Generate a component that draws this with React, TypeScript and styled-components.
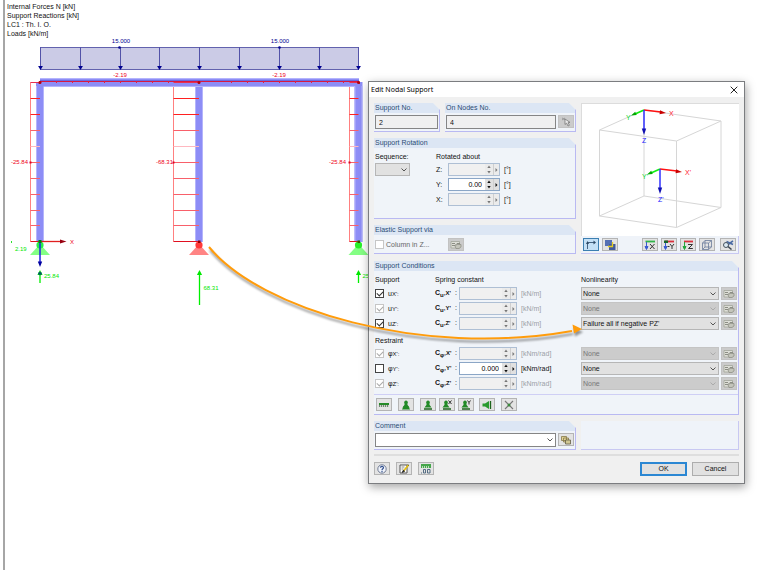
import React, { ReactNode, useId } from "react";
import styled, { createGlobalStyle, css } from "styled-components";

const GlobalStyle = createGlobalStyle`
  * { box-sizing: border-box; }
  body { margin: 0; background: #fff; }
  body, button, input, select {
    font-family: "Liberation Sans", Arial, sans-serif;
    font-size: 7px;
    line-height: 10px;
    color: #111;
  }
  svg { display: block; }
`;

const Page = styled.main`
  position: relative;
  min-height: 100vh;
  padding-left: 3px;
  display: flex;
`;

const Viewport = styled.section`
  flex: 1;
  border-left: 2px solid #a6a6a6;
`;

const Legend = styled.div`
  padding: 2px 0 0 2px;
  line-height: 9px;
`;

/* ---------- structural model ---------- */

const ModelDrawing = styled.svg`
  font-size: 6px;
  font-family: "Liberation Sans", Arial, sans-serif;
`;

const loadX = [40, 80, 120, 159, 199, 239, 279, 319, 358];
const stationY = [98, 114, 130, 146, 162, 178, 194, 210, 225];

function Column({ x, from }: { x: number; from: number }) {
  return (
    <g>
      <rect x={x - 4} y={82} width={8} height={160} fill="#8d8df6" />
      <path d={`M${x - 3.5} 86V242M${x + 3.5} 86V242`} stroke="#b4b4fb" />
      <path d={`M${x} 82.5H${from}V241.5`} fill="none" stroke="#ff8080" />
      {stationY.map((y, i) => (
        <path key={y} d={`M${from} ${y + 0.5}H${x}`} stroke={i < 2 ? "#ff2020" : i === 3 ? "#ffb8c0" : "#f8606a"} />
      ))}
      <path d={`M${from} 241.5H${x}`} stroke="#e01020" />
      <rect x={from - 1} y={161.5} width={2} height={2} fill="#e00020" />
      <circle cx={x} cy={82.5} r={1.5} fill="#a00000" />
    </g>
  );
}

function Support({ x, dot, fill }: { x: number; dot: string; fill: string }) {
  return (
    <g>
      <path d={`M${x} 244l10 11h-20z`} fill={fill} />
      <circle cx={x} cy={245} r={3.6} fill={dot} />
    </g>
  );
}

function Reaction({ x, length, children, labelY }: { x: number; length: number; children: string; labelY: number }) {
  return (
    <g fill="#00e800">
      <path d={`M${x} ${270 + length}V273`} stroke="#00f000" strokeWidth={1.3} />
      <path d={`M${x} 270l2.6 5h-5.2z`} />
      <text x={x + 4} y={labelY}>{children}</text>
    </g>
  );
}

function Model() {
  return (
    <ModelDrawing width="385" height="290" viewBox="5 38 385 290" role="img" aria-label="Frame with internal forces and reactions">
      <rect x={40.5} y={47.5} width={318} height={22} fill="#cbcbe6" stroke="#6262ae" />
      {loadX.map((x) => (
        <g key={x} fill="#000090">
          <path d={`M${x + 0.5} 47V67`} stroke="#5353a8" />
          <path d={`M${x + 0.5} 70l-2.4-4h4.8z`} />
        </g>
      ))}
      <g fill="#000090">
        <circle cx={119.5} cy={47.5} r={1.3} />
        <circle cx={279.5} cy={47.5} r={1.3} />
        <text x={121} y={43} textAnchor="middle">15.000</text>
        <text x={280} y={43} textAnchor="middle">15.000</text>
      </g>
      <g fill="#ee0020">
        <text x={120} y={77} textAnchor="middle">-2.19</text>
        <text x={279} y={77} textAnchor="middle">-2.19</text>
      </g>

      <Column x={40} from={30.5} />
      <Column x={199} from={173.5} />
      <Column x={358.5} from={349.5} />

      <rect x={40} y={78} width={319} height={8.5} fill="#8d8df6" />
      <path d="M40 78.5H359M44 86.5H355" stroke="#b4b4fb" />
      <path d="M40 80.5H359" stroke="#6c6ce0" />
      <path d="M40 81.5H359" stroke="#d81840" />
      <path d="M56.5 81v2M72.5 81v2M88.5 81v2M104.5 81v2M120.5 81v2M136.5 81v2M152.5 81v2M168.5 81v2M231.5 81v2M247.5 81v2M263.5 81v2M279.5 81v2M295.5 81v2M311.5 81v2M327.5 81v2M343.5 81v2" stroke="#e02040" />
      <path d="M173.5 82.5H199M349.5 82.5H359M30.5 82.5H40" stroke="#e83050" />
      <g fill="#b00010">
        <circle cx={40} cy={82.5} r={1.5} />
        <circle cx={199} cy={82.5} r={1.5} />
        <circle cx={358.5} cy={82.5} r={1.5} />
      </g>

      <g fill="#ee0020">
        <text x={11} y={164}>-25.84</text>
        <text x={156} y={164}>-68.31</text>
        <text x={329} y={164}>-25.84</text>
      </g>

      <Support x={40} dot="#28f048" fill="#84ff84" />
      <Support x={199} dot="#ff3838" fill="#ff8484" />
      <Support x={358.5} dot="#28f028" fill="#84ff84" />
      <rect x={198} y={240.5} width={2.5} height={2.5} fill="#900000" />
      <rect x={357.5} y={240.5} width={2.5} height={2.5} fill="#405000" />

      <path d="M40 241.5H60" stroke="#e02020" strokeWidth={1.3} />
      <path d="M66.5 241.5l-6.5-2v4z" fill="#980010" />
      <text x={70} y={244} fill="#ee0020">X</text>
      <path d="M40 243V262" stroke="#2020e0" strokeWidth={1.5} />
      <path d="M40 267l-2.2-5.5h4.4z" fill="#0000a0" />
      <rect x={38.5} y={240} width={3} height={3} fill="#008010" />

      <Reaction x={40} length={13} labelY={278}>25.84</Reaction>
      <Reaction x={199.5} length={35} labelY={290}>68.31</Reaction>
      <Reaction x={358.5} length={13} labelY={278}>25.84</Reaction>
      <circle cx={40} cy={273.5} r={1.8} fill="#006060" />
      <text x={15} y={251} fill="#00e800">2.19</text>
      <rect x={11} y={241} width={1} height={2} fill="#30e030" />
    </ModelDrawing>
  );
}

/* ---------- dialog shell ---------- */

const Dialog = styled.section`
  position: absolute;
  left: 368px;
  right: 15px;
  top: 81px;
  min-width: 377px;
  background: #f0f0f0;
  border: 1px solid #7b7d80;
  box-shadow: 1px 3px 9px rgba(0, 0, 0, 0.36);
`;

const TitleBar = styled.header`
  height: 15px;
  background: #fff;
  display: flex;
  align-items: center;
  justify-content: space-between;
  padding: 0 5px 0 2px;
`;

const Title = styled.h1`
  margin: 0;
  font: 400 7px/12px "Noto Sans", "Open Sans", sans-serif;
  color: #000;
`;

const CloseButton = styled.button`
  padding: 1px;
  border: 0;
  background: none;
`;

const DialogBody = styled.form`
  padding: 6px 5px 7px;
  display: flex;
  flex-direction: column;
`;

const Split = styled.div`
  display: grid;
  grid-template-columns: 202px minmax(0, 1fr);
  column-gap: 5px;
`;

const Stack = styled.div`
  display: flex;
  flex-direction: column;
  gap: 6px;
`;

const NumberGroups = styled.div`
  display: grid;
  grid-template-columns: 66px minmax(0, 1fr);
  gap: 5px;
`;

const Panel = styled.section<{ $grow?: boolean }>`
  background: #f0f4f9;
  border: solid #b9b9f2;
  border-width: 0 1px 1px 0;
  clip-path: polygon(0 0, calc(100% - 7px) 0, 100% 7px, 100% 100%, 0 100%);
  ${(p) => p.$grow && css`flex: 1;`}
`;

const PanelTitle = styled.h2`
  margin: 0;
  padding-left: 1px;
  height: 10px;
  background: #dce6f4;
  color: #2b4c74;
  font-size: 7px;
  font-weight: 400;
  line-height: 10px;
`;

const FieldLine = styled.div`
  display: flex;
  gap: 2px;
  padding: 2px 1px;
`;

const TextField = styled.input`
  flex: 1;
  min-width: 0;
  height: 14px;
  padding: 0 3px;
  border: 1px solid #858585;
  background: #f0f0f0;
`;

/* ---------- small controls ---------- */

const IconButton = styled.button<{ $active?: boolean }>`
  flex: none;
  width: 16px;
  height: 13px;
  padding: 0;
  display: grid;
  place-items: center;
  background: ${(p) => (p.$active ? "#c4e0f6" : "#e3e3e3")};
  border: 1px solid ${(p) => (p.$active ? "#3c7fb1" : "#b4b4b4")};
  &:disabled { background: #cbcbcb; border-color: #c2c2c2; }
`;

const Check = styled.input.attrs({ type: "checkbox" })`
  appearance: none;
  flex: none;
  width: 9px;
  height: 9px;
  margin: 0;
  border: 1px solid #444;
  background: #fff;
  display: grid;
  place-items: center;
  &:disabled { border-color: #c6c6c6; }
  &:checked::after {
    content: "";
    width: 5px;
    height: 3px;
    border: solid #333;
    border-width: 0 0 1px 1px;
    transform: rotate(-45deg);
    margin-bottom: 2px;
  }
  &:checked:disabled::after { border-color: #aaa; }
`;

const SelectFrame = styled.span`
  position: relative;
  display: block;
  flex: 1;
  min-width: 0;
  color: #555;
  & > svg {
    position: absolute;
    right: 3px;
    top: 50%;
    margin-top: -2px;
    pointer-events: none;
  }
  &:has(:disabled) { color: #aaa; }
`;

const SelectBox = styled.select<{ $white?: boolean }>`
  appearance: none;
  display: block;
  width: 100%;
  height: ${(p) => (p.$white ? 14 : 13)}px;
  padding: 0 12px 0 1px;
  border: 1px solid ${(p) => (p.$white ? "#858585" : "#b6b6b6")};
  border-radius: 0;
  background: ${(p) => (p.$white ? "#fff" : "#e1e1e1")};
  &:disabled { background: #cccccc; border-color: #c4c4c4; color: #777; opacity: 1; }
`;

function Select({ label, options, disabled, white }: { label: string; options: string[]; disabled?: boolean; white?: boolean }) {
  return (
    <SelectFrame>
      <SelectBox aria-label={label} disabled={disabled} $white={white}>
        {options.map((o) => <option key={o}>{o}</option>)}
      </SelectBox>
      <svg width="6" height="4" viewBox="0 0 6 4" fill="none" stroke="currentColor"><path d="M.5.5 3 3 5.5.5" /></svg>
    </SelectFrame>
  );
}

const NumberFrame = styled.div<{ $off?: boolean }>`
  display: flex;
  height: 13px;
  border: 1px solid ${(p) => (p.$off ? "#aebfd4" : "#8ba6c6")};
  background: ${(p) => (p.$off ? "#f0f0f0" : "#fff")};
`;

const NumberInput = styled.input`
  flex: 1;
  min-width: 0;
  padding: 0 3px 0 0;
  border: 0;
  background: none;
  text-align: right;
  color: #000;
`;

const Spinner = styled.div`
  display: flex;
  flex-direction: column;
  width: 8px;
`;

const SpinButton = styled.button<{ $side?: boolean }>`
  flex: 1;
  min-height: 0;
  padding: 0;
  border: 0;
  display: grid;
  place-items: center;
  background: #e0e0e0;
  color: #111;
  ${(p) => p.$side && css`flex: none; width: 6px; border-left: 1px solid #cfcfcf;`}
  &:disabled { color: #777; background: #ebebeb; }
`;

function NumberField({ label, value = "" }: { label: string; value?: string }) {
  const off = value === "";
  return (
    <NumberFrame $off={off}>
      <NumberInput aria-label={label} defaultValue={value} disabled={off} />
      <Spinner>
        <SpinButton type="button" aria-label="Increase" disabled={off}>
          <svg width="4" height="3" viewBox="0 0 4 3" fill="currentColor"><path d="M2 .5l1.7 2.5H.3z" /></svg>
        </SpinButton>
        <SpinButton type="button" aria-label="Decrease" disabled={off}>
          <svg width="4" height="3" viewBox="0 0 4 3" fill="currentColor"><path d="M2 2.5L.3 0h3.4z" /></svg>
        </SpinButton>
      </Spinner>
      <SpinButton $side type="button" aria-label="More" disabled={off}>
        <svg width="3" height="4" viewBox="0 0 3 4" fill="currentColor"><path d="M.5 0l2 2-2 2z" /></svg>
      </SpinButton>
    </NumberFrame>
  );
}

/* ---------- icons ---------- */

function Icon({ children }: { children: ReactNode }) {
  return <svg width="12" height="10" viewBox="0 0 12 10" fill="none" aria-hidden="true">{children}</svg>;
}

const DiagramIcon = () => (
  <Icon>
    <path d="M1 1.5h8.5v6.5H1z" fill="#dedfd8" stroke="#a2a49a" strokeWidth=".8" />
    <path d="M2 3.5h3M2 5.5h3l2-2h3" stroke="#8b8d83" />
    <path d="M5 6l2-1.5h4V7L9 8.5H6z" fill="#c4c5bb" stroke="#8b8d83" strokeWidth=".7" />
  </Icon>
);

const PickIcon = () => (
  <Icon>
    <path d="M2 1l3 1.5M2 3l3-2" stroke="#999" />
    <path d="M5 2v5.500l1.600-1.400L8 9l1.400-.7L8 5.700l2-.3z" fill="#eee" stroke="#777" strokeWidth=".8" />
  </Icon>
);

const Base = () => <path d="M2 9h8" stroke="#1c641c" strokeWidth="1.3" />;
const Cone = ({ x = 6 }: { x?: number }) => (
  <g fill="#228a26"><circle cx={x} cy="2.4" r="1.8" /><path d={`M${x - 1} 2h2l.6 3 2 2.5h-7.2L${x - 1.6} 5z`} /></g>
);

const supportIcons: { name: string; gap: number; art: ReactNode }[] = [
  { name: "Free", gap: 0, art: <><path d="M1 4h10" stroke="#258a28" strokeWidth="2" /><path d="M1 6h10" stroke="#4e6a4e" strokeWidth="1.6" strokeDasharray="1.2 .8" /></> },
  { name: "Fixed", gap: 6, art: <><Cone /><path d="M2 9.500l1.500-3h5L10 9.500z" fill="#228a26" /></> },
  { name: "Hinged", gap: 6, art: <><Cone /><Base /></> },
  { name: "Sliding in X", gap: 3, art: <><Cone x={5} /><Base /><path d="M7.500.5l3 3.500M10.500.5l-3 3.500" stroke="#333" /></> },
  { name: "Sliding in Y", gap: 3, art: <><Cone x={5} /><Base /><path d="M7.500.5l1.500 2 1.500-2M9 2.500V4.500" stroke="#333" /></> },
  { name: "Lateral", gap: 5, art: <><path d="M1.500 3.500H4L8 1v8L4 6.500H1.500z" fill="#2a9a2e" /><path d="M9.500 1v8" stroke="#1c641c" strokeWidth="1.3" /></> },
  { name: "Clear", gap: 6, art: <><path d="M2 1l8 8M10 1L2 9" stroke="#777" strokeWidth="1.2" /><circle cx="6" cy="5" r="1.5" fill="#3b8a3b" /></> },
];

const viewIcons: { name: string; active?: boolean; gap: number; art: ReactNode }[] = [
  { name: "Show axes", active: true, gap: 0, art: <><path d="M2.5 9V2.5H10" stroke="#456482" /><path d="M1 4L2.5 1 4 4zM8.500.5L11 2.500 8.500 4.500z" fill="#2c4966" /></> },
  { name: "Show solids", gap: 3, art: <><path d="M1 0h7v6H1z" fill="#5570b4" /><path d="M5 4h6.500v6H5z" fill="#425b9c" /><path d="M4 6.500h4.500V2" stroke="#e6ce26" strokeWidth="1.3" /></> },
  { name: "View in X", gap: 24, art: <><path d="M1.500 1.500h9.500" stroke="#32b44a" strokeWidth="1.800" /><path d="M2.500 2v6M1 6.500h3L2.500 9.500z" fill="#3a5bd2" stroke="#3a5bd2" /><path d="M6 4l4.500 5M10.500 4L6 9" stroke="#333" /></> },
  { name: "View against Y", gap: 3, art: <><path d="M2 1.500h9" stroke="#d8303e" strokeWidth="1.800" /><path d="M2.500 2v6M1 6.500h3L2.500 9.500z" fill="#3a5bd2" stroke="#3a5bd2" /><path d="M1 .5h4v2.500H1z" fill="#17652a" /><path d="M4.500 6.500h2M7 4l2 2.500L11 4M9 6.500V9" stroke="#333" /></> },
  { name: "View in Z", gap: 3, art: <><path d="M2 1.500h9" stroke="#d8303e" strokeWidth="1.800" /><path d="M2.500 2v6M1 6.500h3L2.500 9.500z" fill="#26a83e" stroke="#26a83e" /><path d="M6 4.500h4.500L6.500 8.500h4.300" stroke="#333" /></> },
  { name: "Isometric view", gap: 3, art: <><path d="M1.500 3h6v6.500h-6zM4 .5h6.500V7H4zM1.500 3L4 .5M7.500 3l3-2.500M7.500 9.500l3-2.500M1.500 9.500L4 7" stroke="#6b7c9c" strokeWidth=".8" /></> },
  { name: "Zoom all", gap: 5, art: <><path d="M4.500 1.500l6.500 3M11 .8L5.500 5" stroke="#4a6aa4" strokeWidth="1.600" /><circle cx="4" cy="5" r="2.500" fill="#dceaf4" stroke="#46525e" /><path d="M6 6.500L9.500 9.500" stroke="#3b4653" strokeWidth="1.500" /></> },
];

/* ---------- preview ---------- */

const PreviewColumn = styled.div`
  display: flex;
  flex-direction: column;
`;

const Preview = styled.div`
  height: 133px;
  background: #fff;
  border: solid #dcdcdc;
  border-width: 1px 0 0 1px;
  display: flex;
  justify-content: center;
`;

const CubeDrawing = styled.svg`
  font-size: 7px;
  flex: none;
`;

const ViewTools = styled.div`
  display: flex;
  align-items: center;
  height: 18px;
  padding-left: 2px;
  background: #eff3f9;
  border: solid #c8c8f2;
  border-width: 0 1px 1px 0;
`;

const ToolSlot = styled.span<{ $gap: number }>`
  flex: none;
  margin-left: ${(p) => p.$gap}px;
`;

function Axes({ x, y, mark }: { x: number; y: number; mark: string }) {
  return (
    <g transform={`translate(${x} ${y})`}>
      <path d="M0 0L17 2" stroke="#ff1010" strokeWidth="1.5" />
      <path d="M22 3l-6.500 1.200.5-4z" fill="#c80000" />
      <path d="M0 0L-9 4" stroke="#10f010" strokeWidth="1.5" />
      <path d="M-13 5.500l4.200-3.700 1.500 3.300z" fill="#00a800" />
      <path d="M0 0V19" stroke="#3030ff" strokeWidth="1.5" />
      <path d="M0 25l-2.200-6.500h4.400z" fill="#1010b0" />
      <text x="25" y="6" fill="#ff2030">X{mark}</text>
      <text x="-18" y="10" fill="#10d830">Y{mark}</text>
      <text x="-2" y="33" fill="#2020ff">Z{mark}</text>
    </g>
  );
}

function NodePreview() {
  return (
    <Preview>
      <CubeDrawing width="157" height="132" viewBox="1 1 157 132" role="img" aria-label="Support axes preview">
        <path d="M63 7L140 18 95.5 38 18.5 27zM18.5 27V113L95.5 124.5 140 104.5V18M95.5 38V124.5M63 7V93L140 104.5M63 93L18.5 113" fill="none" stroke="#d6d6d6" />
        <Axes x={63} y={7} mark="" />
        <Axes x={79} y={66} mark="'" />
      </CubeDrawing>
    </Preview>
  );
}

/* ---------- rotation and conditions ---------- */

const RotationGrid = styled.div`
  display: grid;
  grid-template-columns: 61px minmax(0, 1fr);
  padding: 4px 0 0 1px;
`;

const Caption = styled.div`
  height: 11px;
`;

const SequenceBox = styled.div`
  width: 35px;
`;

const AngleRows = styled.div`
  display: grid;
  row-gap: 2px;
`;

const AngleRow = styled.div`
  display: grid;
  grid-template-columns: 12px 52px auto;
  align-items: center;
`;

const Unit = styled.span<{ $off?: boolean }>`
  padding-left: 4px;
  white-space: nowrap;
  color: ${(p) => (p.$off ? "#9b9fa6" : "#111")};
`;

const ColumnLine = styled.div`
  display: flex;
  align-items: center;
  gap: 2px;
  padding: 3px 1px 2px;
  color: #666;
`;

const ColumnLabel = styled.label`
  width: 60px;
`;

const Conditions = styled(Panel)`
  margin-top: 7px;
`;

const conditionColumns = css`
  display: grid;
  grid-template-columns: 60px 24px 58px 64px minmax(0, 1fr) 18px;
  align-items: center;
`;

const HeadRow = styled.div<{ $second?: boolean }>`
  ${conditionColumns}
  margin: ${(p) => (p.$second ? "6px 0 1px" : "0 0 2px")};
  & > :nth-child(2) { grid-column: 2 / 5; }
  & > :nth-child(3) { grid-column: 5; }
`;

const ConditionBody = styled.div`
  padding: 4px 1px 4px;
`;

const Rows = styled.div`
  display: grid;
  row-gap: 2px;
`;

const ConditionRow = styled.div`
  ${conditionColumns}
  height: 13px;
  & > button { justify-self: end; }
`;

const DofLabel = styled.span`
  display: flex;
  align-items: center;
  gap: 4px;
`;

const Axis = styled.small`
  font-size: 6px;
`;

const Constant = styled.span`
  display: flex;
  justify-content: space-between;
  padding-right: 2px;
  white-space: nowrap;
`;

const ConstantName = styled.b`
  small { font-size: 6px; }
  sub { font-size: 6px; line-height: 6px; }
`;

interface Dof { kind: "u" | "φ"; axis: string; checked?: boolean; locked?: boolean; value?: string; nonlinearity: string }

const translations: Dof[] = [
  { kind: "u", axis: "X", checked: true, nonlinearity: "None" },
  { kind: "u", axis: "Y", checked: true, locked: true, nonlinearity: "None" },
  { kind: "u", axis: "Z", checked: true, nonlinearity: "Failure all if negative PZ'" },
];

const rotations: Dof[] = [
  { kind: "φ", axis: "X", checked: true, locked: true, nonlinearity: "None" },
  { kind: "φ", axis: "Y", value: "0.000", nonlinearity: "None" },
  { kind: "φ", axis: "Z", checked: true, locked: true, nonlinearity: "None" },
];

function DofRow({ kind, axis, checked, locked, value, nonlinearity }: Dof) {
  const id = useId();
  const name = `${kind} ${axis}'`;
  return (
    <ConditionRow>
      <DofLabel>
        <Check id={id} defaultChecked={checked} disabled={locked} />
        <label htmlFor={id}>{kind}<Axis>{axis}':</Axis></label>
      </DofLabel>
      <Constant><ConstantName>C<sub>{kind}</sub><small>,{axis}'</small></ConstantName><span>:</span></Constant>
      <NumberField label={`Spring constant ${name}`} value={value} />
      <Unit $off={!value}>{kind === "u" ? "[kN/m]" : "[kNm/rad]"}</Unit>
      <Select label={`Nonlinearity ${name}`} options={[nonlinearity]} disabled={locked} />
      <IconButton type="button" aria-label={`Nonlinearity details ${name}`} disabled><DiagramIcon /></IconButton>
    </ConditionRow>
  );
}

const SupportTools = styled.div`
  display: flex;
  padding: 3px 2px;
  border-top: 1px solid #cfcff5;
`;

const CommentSplit = styled(Split)`
  margin-top: 6px;
`;

const Divider = styled.hr`
  width: 100%;
  height: 2px;
  margin: 4px 0 6px;
  border: 0;
  background: #dedede;
`;

const Footer = styled.footer`
  display: flex;
  justify-content: space-between;
`;

const ButtonSet = styled.div<{ $gap: number }>`
  display: flex;
  gap: ${(p) => p.$gap}px;
`;

const PushButton = styled.button<{ $primary?: boolean }>`
  width: 47px;
  height: 14px;
  padding: 0;
  background: #e1e1e1;
  border: ${(p) => (p.$primary ? "2px solid #2b87d3" : "1px solid #adadad")};
`;

const EmptyPanel = styled.div`
  background: #eff3f9;
  border: solid #c8c8f2;
  border-width: 0 1px 1px 0;
`;

/* ---------- pointer from support to setting ---------- */

const Pointer = styled.svg`
  position: absolute;
  left: 200px;
  top: 240px;
  pointer-events: none;
  filter: drop-shadow(1px 3px 1px rgba(0, 0, 0, 0.4));
`;

export default function App() {
  return (
    <Page>
      <GlobalStyle />
      <Viewport>
        <Legend>
          <div>Internal Forces N [kN]</div>
          <div>Support Reactions [kN]</div>
          <div>LC1 : Th. I. O.</div>
          <div>Loads [kN/m]</div>
        </Legend>
        <Model />
      </Viewport>

      <Dialog role="dialog" aria-labelledby="dialog-title">
        <TitleBar>
          <Title id="dialog-title">Edit Nodal Support</Title>
          <CloseButton type="button" aria-label="Close">
            <svg width="8" height="8" viewBox="0 0 8 8" stroke="#222" fill="none"><path d="M.7.7l6.600 6.600M7.300.7L.7 7.300" /></svg>
          </CloseButton>
        </TitleBar>

        <DialogBody onSubmit={(e: React.FormEvent) => e.preventDefault()}>
          <Split>
            <Stack>
              <NumberGroups>
                <Panel>
                  <PanelTitle>Support No.</PanelTitle>
                  <FieldLine><TextField aria-label="Support No." defaultValue="2" readOnly /></FieldLine>
                </Panel>
                <Panel>
                  <PanelTitle>On Nodes No.</PanelTitle>
                  <FieldLine>
                    <TextField aria-label="On Nodes No." defaultValue="4" readOnly />
                    <IconButton type="button" aria-label="Pick nodes" disabled><PickIcon /></IconButton>
                  </FieldLine>
                </Panel>
              </NumberGroups>

              <Panel $grow>
                <PanelTitle>Support Rotation</PanelTitle>
                <RotationGrid>
                  <div>
                    <Caption>Sequence:</Caption>
                    <SequenceBox><Select label="Sequence" options={[""]} /></SequenceBox>
                  </div>
                  <div>
                    <Caption>Rotated about</Caption>
                    <AngleRows>
                      {[["Z", ""], ["Y", "0.00"], ["X", ""]].map(([axis, value]) => (
                        <AngleRow key={axis}>
                          <span>{axis}:</span>
                          <NumberField label={`Rotation about ${axis}`} value={value} />
                          <Unit>[°]</Unit>
                        </AngleRow>
                      ))}
                    </AngleRows>
                  </div>
                </RotationGrid>
              </Panel>

              <Panel>
                <PanelTitle>Elastic Support via</PanelTitle>
                <ColumnLine>
                  <Check id="column-z" disabled />
                  <ColumnLabel htmlFor="column-z">Column in Z...</ColumnLabel>
                  <IconButton type="button" aria-label="Edit column" disabled><DiagramIcon /></IconButton>
                </ColumnLine>
              </Panel>
            </Stack>

            <PreviewColumn>
              <NodePreview />
              <ViewTools>
                {viewIcons.map((v) => (
                  <ToolSlot key={v.name} $gap={v.gap}>
                    <IconButton type="button" aria-label={v.name} $active={v.active}><Icon>{v.art}</Icon></IconButton>
                  </ToolSlot>
                ))}
              </ViewTools>
            </PreviewColumn>
          </Split>

          <Conditions>
            <PanelTitle>Support Conditions</PanelTitle>
            <ConditionBody>
              <HeadRow><span>Support</span><span>Spring constant</span><span>Nonlinearity</span></HeadRow>
              <Rows>{translations.map((d) => <DofRow key={d.axis} {...d} />)}</Rows>
              <HeadRow $second><span>Restraint</span></HeadRow>
              <Rows>{rotations.map((d) => <DofRow key={d.axis} {...d} />)}</Rows>
            </ConditionBody>
            <SupportTools>
              {supportIcons.map((s) => (
                <ToolSlot key={s.name} $gap={s.gap}>
                  <IconButton type="button" aria-label={s.name}><Icon>{s.art}</Icon></IconButton>
                </ToolSlot>
              ))}
            </SupportTools>
          </Conditions>

          <CommentSplit>
            <Panel>
              <PanelTitle>Comment</PanelTitle>
              <FieldLine>
                <Select label="Comment" options={[""]} white />
                <IconButton type="button" aria-label="Comment library">
                  <Icon>
                    <path d="M1.500 1.500h5v4h-5zM3.500 3h5v4h-5z" fill="#e2d394" stroke="#85784a" strokeWidth=".8" />
                    <path d="M5.500 5h5v4h-5z" fill="#cfc693" stroke="#666048" strokeWidth=".8" />
                  </Icon>
                </IconButton>
              </FieldLine>
            </Panel>
            <EmptyPanel />
          </CommentSplit>

          <Divider />

          <Footer>
            <ButtonSet $gap={6}>
              <IconButton type="button" aria-label="Help">
                <Icon>
                  <circle cx="6" cy="5" r="4.200" fill="#eef2fa" stroke="#65708a" strokeWidth=".9" />
                  <path d="M4.500 3.800C4.500 2 7.500 2 7.500 3.700 7.500 5 6 4.700 6 6.200M6 7v1.200" stroke="#34518f" strokeWidth="1.200" />
                </Icon>
              </IconButton>
              <IconButton type="button" aria-label="Edit">
                <Icon>
                  <path d="M2 1h7v8H2z" fill="#fff" stroke="#555" />
                  <path d="M3.500 3h3M3.500 5h2" stroke="#888" />
                  <path d="M10.500 1L5.500 7" stroke="#e2bd12" strokeWidth="1.800" />
                  <path d="M5.500 6L4 8.500l2.500-1zM9.500.5l1.500 1" fill="#222" stroke="#222" strokeWidth=".7" />
                </Icon>
              </IconButton>
              <IconButton type="button" aria-label="Units">
                <Icon>
                  <path d="M1 0h10v4H1z" fill="#45a64a" />
                  <path d="M2.500 2v2M4.500 2v2M6.500 2v2M8.500 2v2" stroke="#d5edd5" strokeWidth=".8" />
                  <path d="M1 9h1M3.500 5.500h2V9h-2zM7.500 5.500h2.500V9H7.500z" stroke="#466179" strokeWidth=".9" />
                </Icon>
              </IconButton>
            </ButtonSet>
            <ButtonSet $gap={5}>
              <PushButton type="submit" $primary>OK</PushButton>
              <PushButton type="button">Cancel</PushButton>
            </ButtonSet>
          </Footer>
        </DialogBody>
      </Dialog>

      <Pointer width="390" height="110" viewBox="200 240 390 110" aria-hidden="true">
        <path d="M209 247C260 309 420 358 572 331" fill="none" stroke="#ff9c0c" strokeWidth="2" />
        <path d="M582 329l-9.500-4.500 1.500 9z" fill="#ff9c0c" />
      </Pointer>
    </Page>
  );
}
